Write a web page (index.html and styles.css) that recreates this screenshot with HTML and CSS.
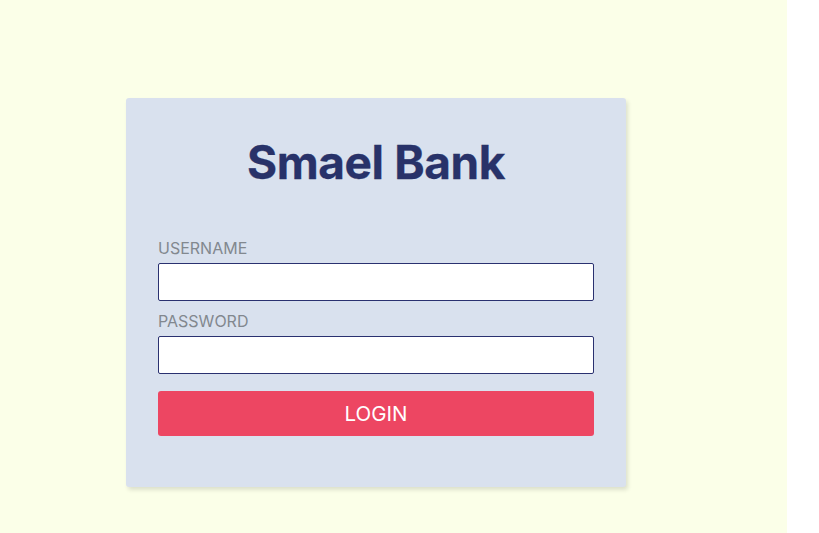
FILE: index.html
```html
<!DOCTYPE html>
<html lang="en">
<head>
<meta charset="utf-8">
<title>Smael Bank</title>
<link rel="stylesheet" href="styles.css">
</head>
<body>
<div class="page">
  <form class="card">
    <h1 class="title">Smael Bank</h1>
    <label class="label" for="username">USERNAME</label>
    <input class="input" id="username" type="text">
    <label class="label" for="password">PASSWORD</label>
    <input class="input" id="password" type="password">
    <button class="button" type="button">LOGIN</button>
  </form>
</div>
</body>
</html>
```
FILE: styles.css
```css
html, body {
  margin: 0;
  padding: 0;
  background: #ffffff;
}
.page {
  width: 787px;
  height: 533px;
  background: #fbffe8;
  padding: 98px 0 0 126px;
  box-sizing: border-box;
  font-family: Inter, "Noto Sans", sans-serif;
}
.card {
  width: 500px;
  height: 389px;
  box-sizing: border-box;
  background: #d9e1ee;
  border-radius: 3px;
  box-shadow: 2px 3px 4px rgba(0, 0, 0, 0.12);
  padding: 36px 32px 0 32px;
  display: flex;
  flex-direction: column;
}
.title {
  margin: 0 0 50px 0;
  text-align: center;
  font-size: 46px;
  font-weight: 700;
  color: #283269;
  letter-spacing: -0.4px;
  line-height: 56px;
  -webkit-text-stroke: 0.3px #283269;
}
.label {
  font-size: 16px;
  color: #82888f;
  line-height: 16px;
  margin-bottom: 7px;
}
.input {
  height: 38px;
  box-sizing: border-box;
  border: 1px solid #2a3170;
  border-radius: 2px;
  background: #fff;
  margin: 0 0 12px 0;
  padding: 0 8px;
}
.button {
  margin-top: 5px;
  height: 45px;
  border: none;
  border-radius: 3px;
  background: #ed4662;
  color: #fff;
  font-family: Inter, "Noto Sans", sans-serif;
  font-size: 20.5px;
}
```
